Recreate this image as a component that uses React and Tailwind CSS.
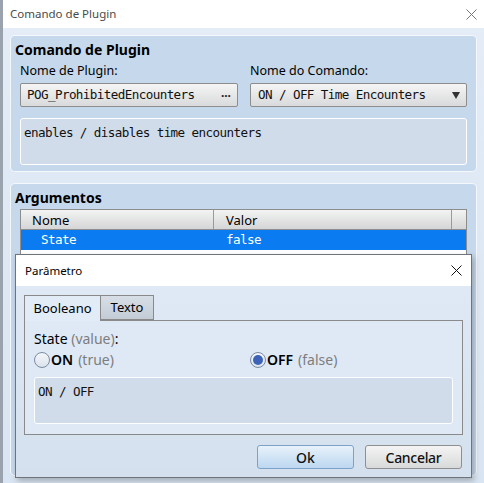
import React from "react";

const ui = { fontFamily: '"Noto Sans", "Open Sans", sans-serif' };
const mono = { fontFamily: '"DejaVu Sans Mono", "Liberation Mono", monospace', fontSize: "12.6px", letterSpacing: "-0.6px" };

function CloseX({ size = 11, color = "#333" }) {
  return (
    <svg width={size} height={size} viewBox="0 0 11 11">
      <path d="M0.5 0.5 L10.5 10.5 M10.5 0.5 L0.5 10.5" stroke={color} strokeWidth="1" fill="none" />
    </svg>
  );
}

function Radio({ checked }) {
  return (
    <div className="w-[16px] h-[16px] rounded-full border border-[#7b8ba0] bg-gradient-to-b from-[#f4f7fb] to-[#dbe3ec] flex items-center justify-center shrink-0">
      {checked && <div className="w-[10px] h-[10px] rounded-full bg-[#3d63b8]" />}
    </div>
  );
}

export default function App() {
  return (
    <div className="relative w-[484px] h-[483px] overflow-hidden bg-[#dfe9f5] flex flex-col" style={ui}>
      {/* title bar */}
      <div className="h-[28px] bg-white flex items-center justify-between pl-[10px] pr-[7px] shrink-0">
        <span className="text-[11.5px] text-[#4a4a4a]">Comando de Plugin</span>
        <CloseX size={11} color="#777" />
      </div>
      <div className="absolute left-0 top-0 w-[3px] h-full bg-[#9aa3ad]" />

      <div className="flex flex-col gap-[11px] pl-[10px] pr-[7px] pt-[7px] bg-gradient-to-b from-[#e3ecf7] to-[#d9e5f2] flex-1">
        {/* panel 1 */}
        <div className="h-[137px] rounded-[5px] border border-white/80 bg-[#c6d8eb] flex flex-col pl-[4px] pr-[9px] pt-[6px]">
          <div className="text-[14px] font-bold text-black leading-[16px] h-[16px]">Comando de Plugin</div>
          <div className="flex gap-[12px] pl-[5px] mt-[6px]">
            <div className="flex flex-col w-[218px]">
              <span className="text-[12.5px] leading-[14px] text-black">Nome de Plugin:</span>
              <div className="mt-[5px] h-[24px] rounded-[2px] border border-[#8d8d8d] bg-gradient-to-b from-[#f5f5f5] to-[#d9dadb] flex items-center justify-between pl-[6px] pr-[6px]">
                <span className="text-[#111]" style={mono}>POG_ProhibitedEncounters</span>
                <span className="text-[12px] font-bold text-[#222] leading-none pt-[1px]">···</span>
              </div>
            </div>
            <div className="flex flex-col w-[217px]">
              <span className="text-[12.5px] leading-[14px] text-black">Nome do Comando:</span>
              <div className="mt-[5px] h-[24px] rounded-[2px] border border-[#8d8d8d] bg-gradient-to-b from-[#f5f5f5] to-[#d9dadb] flex items-center justify-between pl-[7px] pr-[6px]">
                <span className="text-[#111]" style={mono}>ON / OFF Time Encounters</span>
                <svg width="8" height="7" viewBox="0 0 8 7"><path d="M0 0 L8 0 L4 7 Z" fill="#333" /></svg>
              </div>
            </div>
          </div>
          <div className="ml-[5px] mt-[11px] h-[47px] rounded-[3px] border border-white bg-[#d0dcea] px-[3px] pt-[3px] leading-[18px]">
            <span className="text-[#111]" style={mono}>enables / disables time encounters</span>
          </div>
        </div>

        {/* panel 2 */}
        <div className="h-[293px] rounded-[5px] border border-white/80 bg-[#c6d8eb] flex flex-col pl-[4px] pr-[9px] pt-[6px]">
          <div className="text-[14px] font-bold text-black leading-[16px] h-[16px]">Argumentos</div>
          <div className="ml-[5px] mt-[3px] border border-[#8d8d8d] bg-white flex flex-col">
            <div className="h-[20px] flex bg-gradient-to-b from-[#f3f3f3] to-[#d5d6d7] border-b border-[#8d8d8d] text-[13px] text-black">
              <div className="w-[193px] border-r border-[#9a9a9a] pl-[11px] leading-[21px]">Nome</div>
              <div className="w-[238px] border-r border-[#9a9a9a] pl-[12px] leading-[21px]">Valor</div>
              <div className="flex-1" />
            </div>
            <div className="h-[20px] flex bg-[#0a7bf0] text-white items-center">
              <div className="w-[193px] pl-[20px]" style={mono}>State</div>
              <div className="pl-[12px]" style={mono}>false</div>
            </div>
            <div className="h-[30px] bg-white" />
          </div>
        </div>
      </div>

      {/* dialog overlay */}
      <div className="absolute left-[15px] top-[254px] w-[457px] h-[224px] border border-[#6f747a] shadow-[2px_3px_6px_rgba(0,0,0,0.25)] flex flex-col bg-gradient-to-b from-[#e1ebf7] to-[#d4e0ed]">
        <div className="h-[31px] bg-white flex items-center justify-between pl-[9px] pr-[9px] shrink-0">
          <span className="text-[11.5px] text-black">Parâmetro</span>
          <CloseX size={11} color="#111" />
        </div>
        <div className="flex flex-col pl-[8px] pr-[8px] pt-[8px]">
          <div className="flex items-end h-[26px]">
            <div className="w-[77px] h-[26px] border border-b-0 border-[#8a8a8a] bg-[#e2ecf7] text-[13px] text-black flex items-center justify-center relative top-[1px] z-10">Booleano</div>
            <div className="w-[53px] h-[25px] border border-l-0 border-[#8a8a8a] bg-gradient-to-b from-[#d7dee6] to-[#c3ccd6] text-[13px] text-black flex items-center justify-center">Texto</div>
          </div>
          <div className="h-[115px] border border-[#8a8a8a] bg-[#dee9f5] flex flex-col pl-[9px] pr-[9px] pt-[10px]">
            <div className="text-[14px] leading-[16px] text-black">State <span className="text-[#7d7d7d]">(value)</span>:</div>
            <div className="flex mt-[4px] h-[17px] items-center">
              <div className="w-[216px] flex items-center gap-[1px]">
                <Radio checked={false} />
                <span className="text-[14px] text-black font-semibold">ON</span>
                <span className="text-[14px] text-[#7d7d7d] ml-[4px]">(true)</span>
              </div>
              <div className="flex items-center gap-[1px]">
                <Radio checked={true} />
                <span className="text-[14px] text-black font-semibold">OFF</span>
                <span className="text-[14px] text-[#7d7d7d] ml-[4px]">(false)</span>
              </div>
            </div>
            <div className="mt-[9px] h-[47px] rounded-[3px] border border-white bg-[#d0dcea] px-[3px] pt-[3px] leading-[18px]">
              <span className="text-[#111]" style={mono}>ON / OFF</span>
            </div>
          </div>
          <div className="flex justify-end gap-[11px] mt-[10px] pr-[1px]">
            <div className="w-[97px] h-[24px] rounded-[3px] border border-[#7ca2c8] bg-gradient-to-b from-[#e8f2fb] to-[#bcd7f0] flex items-center justify-center text-[14px] font-medium text-[#111]">Ok</div>
            <div className="w-[97px] h-[24px] rounded-[3px] border border-[#8f8f8f] bg-gradient-to-b from-[#f4f4f4] to-[#d8d9da] flex items-center justify-center text-[14px] font-medium text-[#111] tracking-[-0.3px]">Cancelar</div>
          </div>
        </div>
      </div>
    </div>
  );
}
